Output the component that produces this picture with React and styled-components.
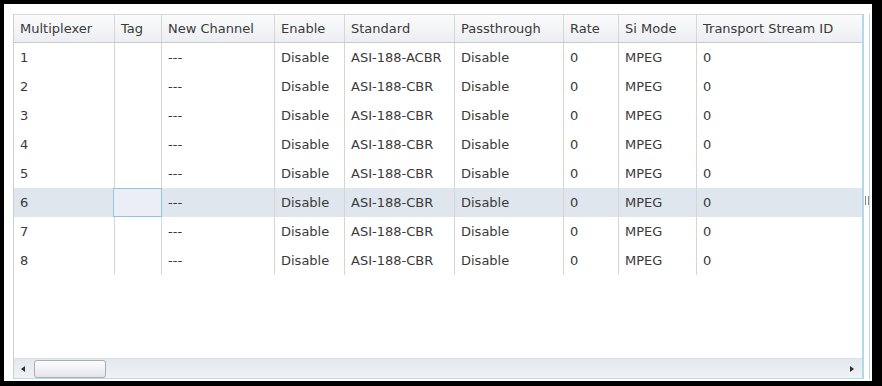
import React from 'react';
import styled, { createGlobalStyle } from 'styled-components';

const GlobalStyle = createGlobalStyle`
  html, body {
    margin: 0;
    padding: 0;
    background: #000;
  }
  * {
    box-sizing: border-box;
  }
`;

const COLUMNS = '101px 47px 113px 70px 110px 109px 55px 78px 1fr';

const headers = [
  'Multiplexer', 'Tag', 'New Channel', 'Enable', 'Standard',
  'Passthrough', 'Rate', 'Si Mode', 'Transport Stream ID',
];

const rows = [1, 2, 3, 4, 5, 6, 7, 8].map((id) => ({
  id,
  tag: '',
  channel: '---',
  enable: 'Disable',
  standard: id === 1 ? 'ASI-188-ACBR' : 'ASI-188-CBR',
  passthrough: 'Disable',
  rate: '0',
  siMode: 'MPEG',
  tsId: '0',
}));

const Frame = styled.div`
  width: 882px;
  height: 386px;
  padding: 4px 10px 5px 4px;
  background: #000;
`;

const Panel = styled.div`
  height: 100%;
  background: #fff;
  padding: 10px 2px 2px 9px;
  display: flex;
`;

const Grid = styled.div`
  flex: 1;
  display: flex;
  min-width: 0;
`;

const Main = styled.div`
  flex: 1;
  display: flex;
  flex-direction: column;
  border-left: 1px solid #c9d0d6;
  border-bottom: 1px solid #b9dbe8;
  min-width: 0;
`;

const Body = styled.div`
  flex: 1;
  font-family: "DejaVu Sans", Verdana, sans-serif;
  font-size: 13px;
  color: #3a3a3a;
`;

const HeaderRow = styled.div`
  display: grid;
  grid-template-columns: ${COLUMNS};
  height: 29px;
  background: linear-gradient(#fbfbfc, #eceef1);
  border-top: 1px solid #d3d7db;
  border-bottom: 1px solid #c6cacf;
`;

const Row = styled.div`
  display: grid;
  grid-template-columns: ${COLUMNS};
  height: 29px;
  background: ${(p) => (p.$selected ? '#dfe6ee' : '#fff')};
`;

const Cell = styled.div`
  display: flex;
  align-items: center;
  padding-left: 6px;
  white-space: nowrap;
  overflow: hidden;
  border-right: ${(p) => (p.$last ? 'none' : '1px solid #d6d6d6')};
`;

const FocusCell = styled(Cell)`
  background: #eceef7;
  border: 1px solid #8ec8d8;
  margin-left: -2px;
`;

const HScroll = styled.div`
  height: 20px;
  display: flex;
  align-items: center;
  padding: 0 8px 0 7px;
  background: linear-gradient(#e4e9ef, #eef1f5);
  border-top: 1px solid #dbe1e8;
`;

const Arrow = styled.span`
  width: 0;
  height: 0;
  border-top: 3px solid transparent;
  border-bottom: 3px solid transparent;
  ${(p) => (p.$dir === 'left'
    ? 'border-right: 4px solid #2f2f2f;'
    : 'border-left: 4px solid #2f2f2f;')}
`;

const Thumb = styled.div`
  width: 72px;
  height: 18px;
  margin-left: 9px;
  border: 1px solid #a7aeb6;
  border-radius: 3px;
  background: linear-gradient(#fdfdfd, #e3e6ea);
`;

const Track = styled.div`
  flex: 1;
`;

const VScroll = styled.div`
  width: 8px;
  border-left: 2px solid #b3d8e8;
  border-right: 1px solid #b3d8e8;
  background: #fff;
  display: flex;
  flex-direction: column;
  align-items: center;
  padding-top: 182px;
`;

const Grip = styled.div`
  width: 4px;
  height: 9px;
  border-left: 1px solid #8a8a8a;
  border-right: 1px solid #8a8a8a;
`;

const fields = ['id', 'tag', 'channel', 'enable', 'standard', 'passthrough', 'rate', 'siMode', 'tsId'];

const App = () => (
  <>
    <GlobalStyle />
    <Frame>
      <Panel>
        <Grid>
          <Main>
            <Body>
              <HeaderRow>
                {headers.map((h, i) => (
                  <Cell key={h} $last={i === headers.length - 1}>{h}</Cell>
                ))}
              </HeaderRow>
              {rows.map((row) => (
                <Row key={row.id} $selected={row.id === 6}>
                  {fields.map((f, i) => (row.id === 6 && f === 'tag'
                    ? <FocusCell key={f} />
                    : <Cell key={f} $last={i === fields.length - 1}>{row[f]}</Cell>))}
                </Row>
              ))}
            </Body>
            <HScroll>
              <Arrow $dir="left" />
              <Thumb />
              <Track />
              <Arrow $dir="right" />
            </HScroll>
          </Main>
          <VScroll>
            <Grip />
          </VScroll>
        </Grid>
      </Panel>
    </Frame>
  </>
);

export default App;
